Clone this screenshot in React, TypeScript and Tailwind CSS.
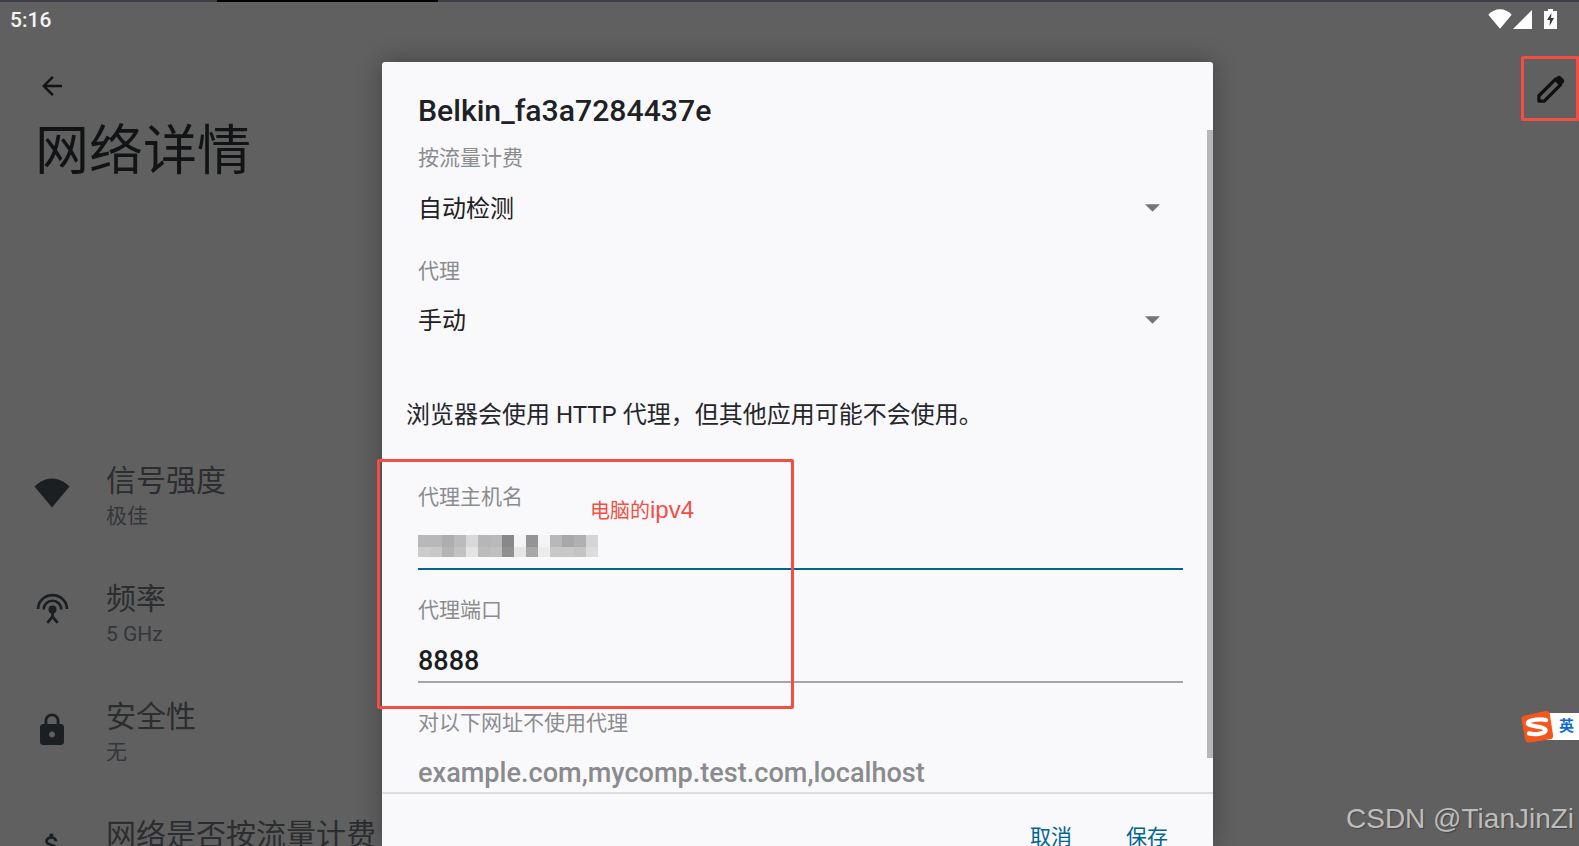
import { MdArrowBack, MdLock, MdAttachMoney } from "react-icons/md";

const sans = "font-['Roboto','Noto_Sans_CJK_SC',sans-serif]";

const mosaicTop = ["bg-[#b8b8b8]","bg-[#b8b8b8]","bg-[#aeaeae]","bg-[#bbbbbb]","bg-[#d8d8d8]","bg-[#b6b6b6]","bg-[#b9b9b9]","bg-[#888888]","bg-[#f4f4f6]","bg-[#949494]","bg-[#f4f4f6]","bg-[#b8b8b8]","bg-[#a8a8a8]","bg-[#b0b0b0]","bg-[#d4d4d4]"];
const mosaicBottom = ["bg-[#cccccc]","bg-[#c8c8c8]","bg-[#b4b4b4]","bg-[#c2c2c2]","bg-[#e4e4e4]","bg-[#bcbcbc]","bg-[#c0c0c0]","bg-[#909090]","bg-[#e6e6e6]","bg-[#a8a8a8]","bg-[#ececec]","bg-[#c8c8c8]","bg-[#c8c8c8]","bg-[#c4c4c4]","bg-[#dcdcdc]"];

function WifiFan({ className }: { className: string }) {
  return (
    <svg viewBox="0 0 36 30" className={className} fill="currentColor">
      <path d="M18 29.5 0.5 8.6C5.5 3.5 11.5 0.5 18 0.5s12.5 3 17.5 8.1Z" />
    </svg>
  );
}

function Antenna() {
  return (
    <svg viewBox="0 0 32 32" className="w-[33px] h-[33px] -mt-[3px] text-[#1b1f22]" fill="none" stroke="currentColor" strokeWidth="2.6">
      <path d="M2 15.5C2 8 8.3 2 16 2s14 6 14 13.5" />
      <path d="M7.5 16C7.5 11.3 11.3 7.5 16 7.5s8.5 3.8 8.5 8.5" />
      <circle cx="16" cy="16" r="2.6" fill="currentColor" />
      <path d="M16 18v5M16 23l-5 6M16 23l5 6" />
    </svg>
  );
}

function InfoRow({ icon, title, sub }: { icon: React.ReactNode; title: string; sub?: string }) {
  return (
    <div className="flex h-[118px] pl-[34px]">
      <div className="w-[36px] shrink-0 flex justify-center items-start pt-[14px]">{icon}</div>
      <div className="ml-[36px] -mt-[1px]">
        <div className="text-[30px] leading-[36px] text-[#2b2d2f]">{title}</div>
        {sub && <div className="text-[21px] leading-[34px] text-[#33363a]">{sub}</div>}
      </div>
    </div>
  );
}

function Label({ children, className = "" }: { children: React.ReactNode; className?: string }) {
  return <div className={`h-[30px] leading-[30px] text-[21px] text-[#8b8c8e] ${className}`}>{children}</div>;
}

function SelectValue({ children, className = "" }: { children: React.ReactNode; className?: string }) {
  return (
    <div className={`h-[30px] flex items-center justify-between pr-[23px] text-[24px] text-[#1f2022] ${className}`}>
      <span className="mt-[1px]">{children}</span>
      <svg viewBox="0 0 14 7" className="w-[15px] h-[8px] text-[#757575]" fill="currentColor">
        <path d="M0 0h14L7 7Z" />
      </svg>
    </div>
  );
}

export default function App() {
  return (
    <div className={`relative w-[1579px] h-[846px] overflow-hidden bg-[#606060] ${sans}`}>
      {/* page behind the dialog */}
      <div className="flex flex-col h-full">
        <div className="flex h-[2px] shrink-0">
          <div className="w-[217px] bg-[#3f3f49]" />
          <div className="w-[221px] bg-black" />
          <div className="flex-1 bg-[#3f3f49]" />
        </div>
        <div className="flex items-center justify-between h-[37px] shrink-0 pl-[10px] pr-[22px]">
          <span className="text-[21px] font-medium text-[#f4f4f4]">5:16</span>
          <div className="flex items-center gap-[1px] mt-[-3px]">
            <WifiFan className="w-[24px] h-[20px] text-white" />
            <svg viewBox="0 0 19 19" className="w-[19px] h-[19px] text-white" fill="currentColor">
              <path d="M19 0v19H0Z" />
            </svg>
            <svg viewBox="0 0 13 20" className="ml-[11px] w-[13px] h-[20px]">
              <path d="M4 0h5v2h4v18H0V2h4Z" fill="#fff" />
              <path d="M7.500 4 3 11h3l-.5 6 4.500-8H7Z" fill="#3a3a3a" />
            </svg>
          </div>
        </div>
        <div className="pl-[37px] pt-[32px] h-[87px] shrink-0">
          <MdArrowBack className="w-[30px] h-[30px] text-[#111315]" />
        </div>
        <div className="pl-[35px] h-[343px] shrink-0 text-[54px] leading-[62px] text-[#111315] -mt-[5px]">网络详情</div>
        <div className="flex flex-col">
          <InfoRow icon={<WifiFan className="w-[36px] h-[30px] text-[#1b1f22]" />} title="信号强度" sub="极佳" />
          <InfoRow icon={<Antenna />} title="频率" sub="5 GHz" />
          <InfoRow icon={<MdLock className="w-[36px] h-[36px] text-[#1b1f22] -mt-[2px]" />} title="安全性" sub="无" />
          <InfoRow icon={<MdAttachMoney className="w-[30px] h-[30px] text-[#1b1f22] -mt-[2px]" />} title="网络是否按流量计费" />
        </div>
      </div>

      {/* dialog */}
      <div className="absolute left-[382px] top-[62px] bottom-0 w-[831px] flex flex-col bg-[#f9f9fc] rounded-t-[3px] shadow-[0_0_26px_rgba(0,0,0,0.3)] overflow-hidden">
        <div className="h-[730px] shrink-0 pl-[36px] pr-[30px] pt-[28px]">
          <div className="h-[40px] leading-[42px] text-[30.2px] font-medium text-[#202124]">Belkin_fa3a7284437e</div>
          <Label className="mt-[13px]">按流量计费</Label>
          <SelectValue className="mt-[20px]">自动检测</SelectValue>
          <Label className="mt-[33px]">代理</Label>
          <SelectValue className="mt-[19px]">手动</SelectValue>
          <div className="mt-[65px] -ml-[12px] h-[30px] leading-[30px] text-[24px] text-[#25262a]">浏览器会使用 HTTP 代理，但其他应用可能不会使用。</div>
          <Label className="mt-[52px]">代理主机名</Label>
          <div className="h-[58px] border-b-2 border-[#00658f] pt-[23px]">
            <div className="flex w-[180px]">{mosaicTop.map((c, i) => <div key={i} className={`h-[12px] flex-1 ${c}`} />)}</div>
            <div className="flex w-[180px]">{mosaicBottom.map((c, i) => <div key={i} className={`h-[10px] flex-1 ${c}`} />)}</div>
          </div>
          <Label className="mt-[25px]">代理端口</Label>
          <div className="h-[58px] border-b-2 border-[#a6a6a8] pt-[21px] leading-[30px] text-[27px] font-medium text-[#1c1d1f]">8888</div>
          <Label className="mt-[25px]">对以下网址不使用代理</Label>
          <div className="mt-[20px] h-[30px] leading-[30px] text-[27.1px] font-medium text-[#8a8b8d]">example.com,mycomp.test.com,localhost</div>
        </div>
        <div className="flex-1 border-t-2 border-[#dedee0] flex justify-end items-start gap-[54px] pt-[29px] pr-[45px] text-[21px] leading-[28px] text-[#00658f]">
          <span>取消</span>
          <span>保存</span>
        </div>
        {/* scrollbar */}
        <div className="absolute right-0 top-[68px] w-[6px] h-[628px] bg-[#b6b6b8]" />
      </div>

      {/* annotations */}
      <div className="absolute left-[377px] top-[459px] w-[417px] h-[250px] border-[3px] border-[#f44e42] rounded-[2px] pointer-events-none" />
      <div className="absolute left-[590px] top-[496px] text-[20px] leading-[28px] text-[#f44e42]">电脑的<span className="font-['Liberation_Sans',sans-serif] text-[24px]">ipv4</span></div>
      <div className="absolute left-[1521px] top-[56px] w-[58px] h-[65px] border-[3px] border-[#f44e42] rounded-[2px] flex items-center justify-center">
        <svg viewBox="0 0 30 30" className="w-[29px] h-[29px] mt-[1px]" fill="none">
          <path d="M3 27v-5.500L20 4.500l5.500 5.500L8.500 27Z" stroke="#0d0f11" strokeWidth="3.400" strokeLinejoin="round" />
          <path d="M19 4.500 22 1.500c1-1 2.500-1 3.500 0l3 3c1 1 1 2.500 0 3.500L25.500 11Z" fill="#0d0f11" />
        </svg>
      </div>

      {/* IME badge */}
      <div className="absolute left-[1540px] top-[713px] w-[39px] h-[27px] bg-white flex items-center justify-end pr-[5px] text-[15px] font-bold text-[#0a6ad6]">英</div>
      <svg viewBox="0 0 30 30" className="absolute left-[1521px] top-[710px] w-[32px] h-[33px]">
        <path d="M3 5 23 0.500c2-.4 3.500.5 4 2.500L30 23c.3 2-.5 3.500-2.500 4L8 30c-2 .3-3.500-.5-4-2.500L0.500 8C.2 6.500 1.500 5.300 3 5Z" fill="#f4561d" />
        <path d="M23.500 9C19 7.500 8 8.500 6.500 11.500c-1.500 4 15 2.500 16.500 6.500 .8 3.500-9.500 5-15.500 3.500" fill="none" stroke="#fff" strokeWidth="4" strokeLinecap="round" />
      </svg>

      {/* watermark */}
      <div className="absolute left-[1346px] top-[803px] font-['Liberation_Sans',sans-serif] text-[28px] leading-[32px] text-[#bdbdbd] [text-shadow:1px_1px_1px_#444]">CSDN @TianJinZi</div>
    </div>
  );
}
